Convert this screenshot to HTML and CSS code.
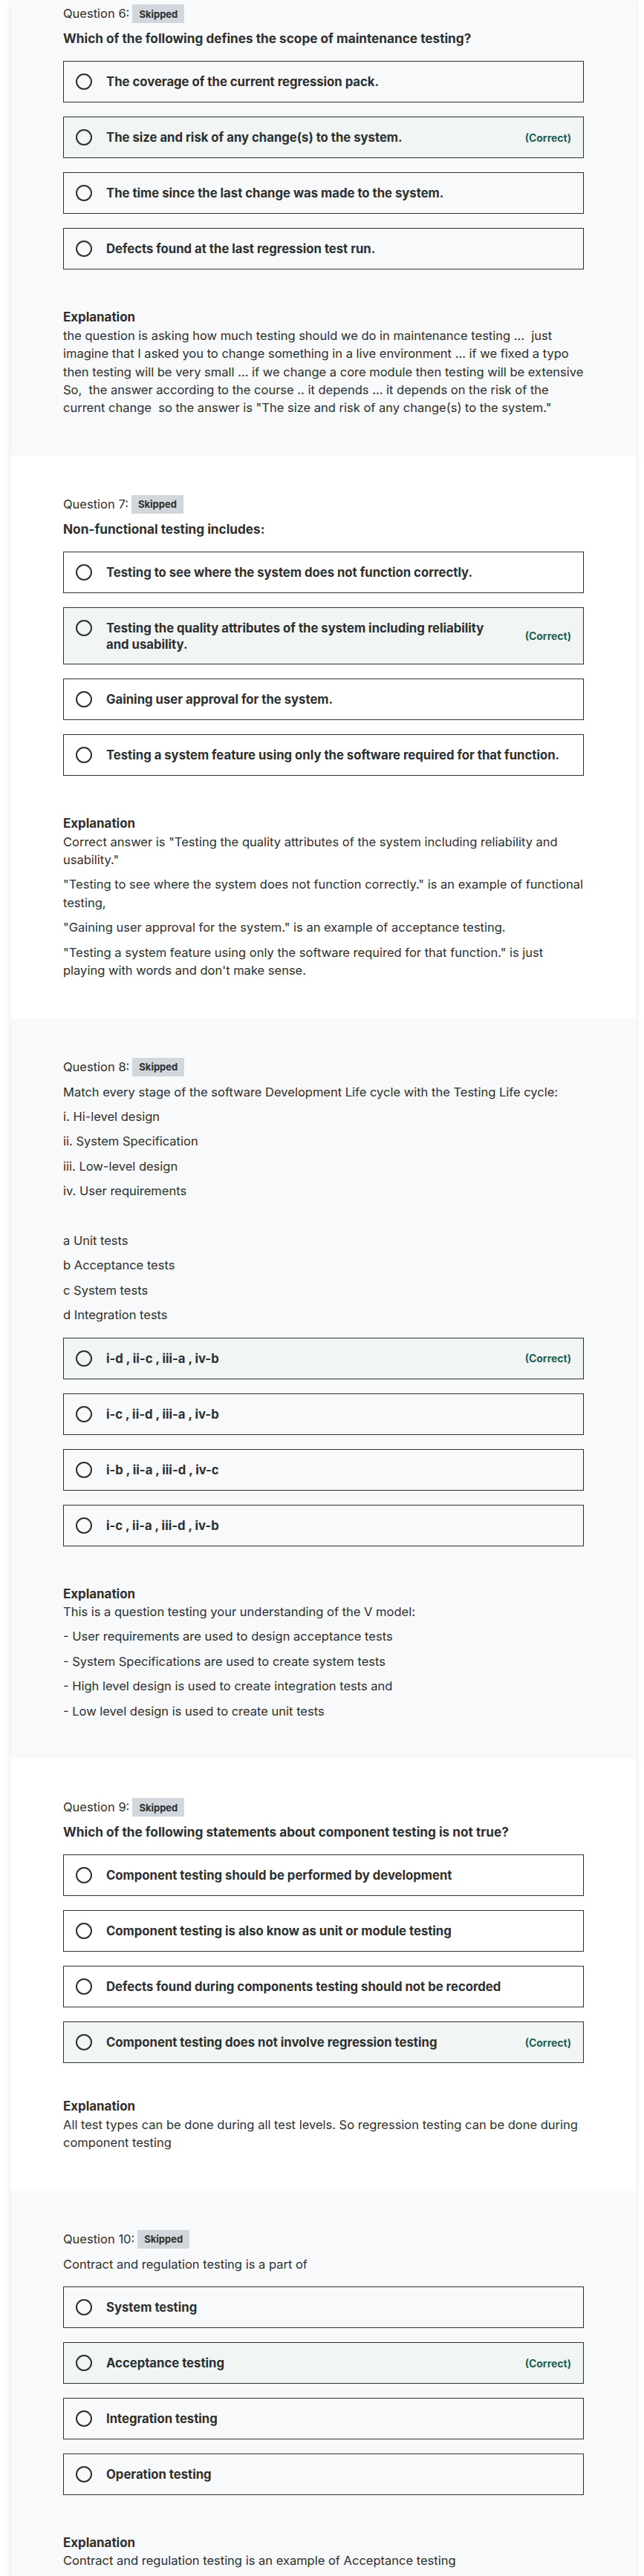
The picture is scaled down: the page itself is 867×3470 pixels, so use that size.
FILE: index.html
```html
<!DOCTYPE html>
<html lang="en">
<head>
<meta charset="utf-8">
<title>Practice test review</title>
<link rel="stylesheet" href="styles.css">
</head>
<body>
<div class="card">

  <section class="q q-gray q-first">
    <div class="q-head"><span class="q-num">Question 6:</span><span class="badge">Skipped</span></div>
    <div class="q-prompt q-bold"><p>Which of the following defines the scope of maintenance testing?</p></div>
    <ul class="opts">
      <li class="opt"><div class="opt-main"><span class="radio"></span><span class="opt-text">The coverage of the current regression pack.</span></div></li>
      <li class="opt opt-correct"><div class="opt-main"><span class="radio"></span><span class="opt-text">The size and risk of any change(s) to the system.</span></div><span class="correct-label">(Correct)</span></li>
      <li class="opt"><div class="opt-main"><span class="radio"></span><span class="opt-text">The time since the last change was made to the system.</span></div></li>
      <li class="opt"><div class="opt-main"><span class="radio"></span><span class="opt-text">Defects found at the last regression test run.</span></div></li>
    </ul>
    <div class="expl">
      <div class="expl-head">Explanation</div>
      <p>the question is asking how much testing should we do in maintenance testing ...&nbsp; just imagine that I asked you to change something in a live environment ... if we fixed a typo then testing will be very small ... if we change a core module then testing will be extensive So,&nbsp; the answer according to the course .. it depends ... it depends on the risk of the current change&nbsp; so the answer is "The size and risk of any change(s) to the system."</p>
    </div>
  </section>

  <section class="q">
    <div class="q-head"><span class="q-num">Question 7:</span><span class="badge">Skipped</span></div>
    <div class="q-prompt q-bold"><p>Non-functional testing includes:</p></div>
    <ul class="opts">
      <li class="opt"><div class="opt-main"><span class="radio"></span><span class="opt-text">Testing to see where the system does not function correctly.</span></div></li>
      <li class="opt opt-correct"><div class="opt-main"><span class="radio"></span><span class="opt-text">Testing the quality attributes of the system including reliability and usability.</span></div><span class="correct-label">(Correct)</span></li>
      <li class="opt"><div class="opt-main"><span class="radio"></span><span class="opt-text">Gaining user approval for the system.</span></div></li>
      <li class="opt"><div class="opt-main"><span class="radio"></span><span class="opt-text">Testing a system feature using only the software required for that function.</span></div></li>
    </ul>
    <div class="expl">
      <div class="expl-head">Explanation</div>
      <p>Correct answer is "Testing the quality attributes of the system including reliability and usability."</p>
      <p>"Testing to see where the system does not function correctly." is an example of functional testing,</p>
      <p>"Gaining user approval for the system." is an example of acceptance testing.</p>
      <p>"Testing a system feature using only the software required for that function." is just playing with words and don't make sense.</p>
    </div>
  </section>

  <section class="q q-gray">
    <div class="q-head"><span class="q-num">Question 8:</span><span class="badge">Skipped</span></div>
    <div class="q-prompt">
      <p>Match every stage of the software Development Life cycle with the Testing Life cycle:</p>
      <p>i. Hi-level design</p>
      <p>ii. System Specification</p>
      <p>iii. Low-level design</p>
      <p>iv. User requirements</p>
      <p>&nbsp;</p>
      <p>a Unit tests</p>
      <p>b Acceptance tests</p>
      <p>c System tests</p>
      <p>d Integration tests</p>
    </div>
    <ul class="opts">
      <li class="opt opt-correct"><div class="opt-main"><span class="radio"></span><span class="opt-text">i-d , ii-c , iii-a , iv-b</span></div><span class="correct-label">(Correct)</span></li>
      <li class="opt"><div class="opt-main"><span class="radio"></span><span class="opt-text">i-c , ii-d , iii-a , iv-b</span></div></li>
      <li class="opt"><div class="opt-main"><span class="radio"></span><span class="opt-text">i-b , ii-a , iii-d , iv-c</span></div></li>
      <li class="opt"><div class="opt-main"><span class="radio"></span><span class="opt-text">i-c , ii-a , iii-d , iv-b</span></div></li>
    </ul>
    <div class="expl">
      <div class="expl-head">Explanation</div>
      <p>This is a question testing your understanding of the V model:</p>
      <p>- User requirements are used to design acceptance tests</p>
      <p>- System Specifications are used to create system tests</p>
      <p>- High level design is used to create integration tests and</p>
      <p>- Low level design is used to create unit tests</p>
    </div>
  </section>

  <section class="q">
    <div class="q-head"><span class="q-num">Question 9:</span><span class="badge">Skipped</span></div>
    <div class="q-prompt q-bold"><p>Which of the following statements about component testing is not true?</p></div>
    <ul class="opts">
      <li class="opt"><div class="opt-main"><span class="radio"></span><span class="opt-text">Component testing should be performed by development</span></div></li>
      <li class="opt"><div class="opt-main"><span class="radio"></span><span class="opt-text">Component testing is also know as unit or module testing</span></div></li>
      <li class="opt"><div class="opt-main"><span class="radio"></span><span class="opt-text">Defects found during components testing should not be recorded</span></div></li>
      <li class="opt opt-correct"><div class="opt-main"><span class="radio"></span><span class="opt-text">Component testing does not involve regression testing</span></div><span class="correct-label">(Correct)</span></li>
    </ul>
    <div class="expl expl-tight">
      <div class="expl-head">Explanation</div>
      <p>All test types can be done during all test levels. So regression testing can be done during component testing</p>
    </div>
  </section>

  <section class="q q-gray">
    <div class="q-head"><span class="q-num">Question 10:</span><span class="badge">Skipped</span></div>
    <div class="q-prompt"><p>Contract and regulation testing is a part of</p></div>
    <ul class="opts">
      <li class="opt"><div class="opt-main"><span class="radio"></span><span class="opt-text">System testing</span></div></li>
      <li class="opt opt-correct"><div class="opt-main"><span class="radio"></span><span class="opt-text">Acceptance testing</span></div><span class="correct-label">(Correct)</span></li>
      <li class="opt"><div class="opt-main"><span class="radio"></span><span class="opt-text">Integration testing</span></div></li>
      <li class="opt"><div class="opt-main"><span class="radio"></span><span class="opt-text">Operation testing</span></div></li>
    </ul>
    <div class="expl">
      <div class="expl-head">Explanation</div>
      <p>Contract and regulation testing is an example of Acceptance testing</p>
    </div>
  </section>

</div>
</body>
</html>
```

FILE: styles.css
```css
* { box-sizing: border-box; }

html, body {
  margin: 0;
  padding: 0;
  background: #ffffff;
}

body {
  font-family: "Inter", "Liberation Sans", Arial, sans-serif;
  font-size: 16.5px;
  color: #2d2f31;
}

.card {
  width: 843px;
  margin-left: 14px;
  background: #ffffff;
  box-shadow: 0 0 1px rgba(0, 0, 0, 0.16), 0 2px 8px rgba(0, 0, 0, 0.08);
}

.q {
  padding: 53px 71px 43px 71px;
  background: #ffffff;
}

.q-gray {
  background: #f7f9fa;
}

.q-first {
  padding-top: 6px;
}

.q-head {
  display: flex;
  align-items: center;
  height: 25px;
}

.q-num {
  font-size: 16.5px;
  line-height: 25px;
  margin-right: 4px;
}

.badge {
  display: inline-flex;
  align-items: center;
  height: 25px;
  padding: 0 9px;
  background: #d1d7dc;
  font-size: 13px;
  font-weight: 700;
  color: #2d2f31;
}

.q-prompt {
  margin-top: 9px;
}

.q-prompt p {
  margin: 0 0 9px;
  line-height: 24.4px;
}

.q-prompt p:last-child {
  margin-bottom: 0;
}

.q-bold p {
  font-size: 17.2px;
  font-weight: 700;
}

.opts {
  list-style: none;
  margin: 18px 0 0;
  padding: 0;
  display: flex;
  flex-direction: column;
  gap: 19px;
}

.opt {
  display: flex;
  align-items: center;
  border: 1px solid #2d2f31;
  padding: 15px 16px 15px 15px;
}

.opt-correct {
  background: #f1f5f3;
}

.opt-main {
  flex: 1;
  display: flex;
  align-items: flex-start;
  gap: 18px;
}

.radio {
  flex: none;
  width: 24px;
  height: 24px;
  display: flex;
  align-items: center;
  justify-content: center;
}

.radio::before {
  content: "";
  width: 22px;
  height: 22px;
  border: 2px solid #2d2f31;
  border-radius: 50%;
  box-sizing: border-box;
}

.opt-text {
  font-size: 16.7px;
  font-weight: 700;
  line-height: 22px;
  padding-top: 1px;
}

.correct-label {
  flex: none;
  margin-left: 32px;
  font-size: 14px;
  font-weight: 700;
  color: #1e6055;
}

.expl {
  margin-top: 52px;
}

.expl-tight {
  margin-top: 46px;
}

.expl-head {
  font-size: 16.9px;
  font-weight: 700;
  line-height: 24.4px;
}

.expl p {
  margin: 0 0 9px;
  line-height: 24.4px;
}
```
